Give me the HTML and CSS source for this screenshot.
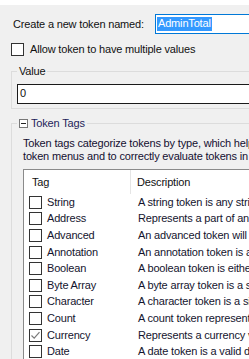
FILE: index.html
```html
<!DOCTYPE html>
<html>
<head>
<meta charset="utf-8">
<link rel="stylesheet" href="styles.css">
</head>
<body>
<div class="strip"></div>
<div class="name-row">
  <span class="name-label">Create a new token named:</span>
  <div class="textbox focused"><span class="sel">AdminTotal</span></div>
</div>
<div class="check-row">
  <span class="box"></span>
  <span>Allow token to have multiple values</span>
</div>
<fieldset class="group value-group">
  <legend>Value</legend>
  <div class="textbox dark">0</div>
</fieldset>
<fieldset class="group tags-group">
  <legend><span class="toggle"><span class="minus"></span></span><span class="title">Token Tags</span></legend>
  <p class="desc">Token tags categorize tokens by type, which helps build<br>token menus and to correctly evaluate tokens in documents.</p>
  <div class="listview">
    <div class="lv-header">
      <div class="col-tag">Tag</div>
      <div class="col-desc">Description</div>
    </div>
    <div class="lv-row"><div class="col-tag"><span class="box"></span>String</div><div class="col-desc">A string token is any string of text.</div></div>
    <div class="lv-row"><div class="col-tag"><span class="box"></span>Address</div><div class="col-desc">Represents a part of an address.</div></div>
    <div class="lv-row"><div class="col-tag"><span class="box"></span>Advanced</div><div class="col-desc">An advanced token will not be shown.</div></div>
    <div class="lv-row"><div class="col-tag"><span class="box"></span>Annotation</div><div class="col-desc">An annotation token is a note.</div></div>
    <div class="lv-row"><div class="col-tag"><span class="box"></span>Boolean</div><div class="col-desc">A boolean token is either true or false.</div></div>
    <div class="lv-row"><div class="col-tag"><span class="box"></span>Byte Array</div><div class="col-desc">A byte array token is a sequence.</div></div>
    <div class="lv-row"><div class="col-tag"><span class="box"></span>Character</div><div class="col-desc">A character token is a single character.</div></div>
    <div class="lv-row"><div class="col-tag"><span class="box"></span>Count</div><div class="col-desc">A count token represents a number.</div></div>
    <div class="lv-row"><div class="col-tag"><span class="box checked"><svg width="11" height="11" viewBox="0 0 11 11"><path d="M1.5 5.5 L4.2 8.2 L9.5 2.2" fill="none" stroke="#7a7a7a" stroke-width="1.2"/></svg></span>Currency</div><div class="col-desc">Represents a currency value.</div></div>
    <div class="lv-row"><div class="col-tag"><span class="box"></span>Date</div><div class="col-desc">A date token is a valid date.</div></div>
  </div>
</fieldset>
</body>
</html>
```
FILE: styles.css
```css
html, body {
  margin: 0;
  padding: 0;
  width: 249px;
  height: 359px;
  overflow: hidden;
}
body {
  background: #f0f0f0;
  font-family: "Liberation Sans", Arial, sans-serif;
  font-size: 11px;
  letter-spacing: -0.17px;
  color: #111;
  line-height: 13px;
}
.strip {
  height: 5px;
  background: #fff;
}
.name-row {
  display: flex;
  align-items: center;
  margin-top: 9px;
  padding-left: 13px;
  white-space: nowrap;
}
.name-label {
  width: 142px;
  flex: none;
}
.textbox {
  box-sizing: border-box;
  height: 20px;
  background: #fff;
  border: 1px solid #0078d7;
  padding: 2px 1px;
  white-space: nowrap;
  width: 140px;
  flex: none;
}
.textbox.dark {
  border-color: #1a1a1a;
  width: 260px;
  padding: 2px 2px;
}
.sel {
  background: #3399ff;
  color: #fff;
  padding: 0 1px 1px 1px;
  display: inline-block;
  line-height: 13px;
}
.check-row {
  display: flex;
  align-items: center;
  gap: 6px;
  margin-top: 9px;
  padding-left: 11px;
  white-space: nowrap;
}
.box {
  box-sizing: border-box;
  width: 13px;
  height: 13px;
  border: 1px solid #333;
  background: #fff;
  flex: none;
  display: inline-flex;
  align-items: center;
  justify-content: center;
}
.box.checked svg {
  display: block;
}
.group {
  border: 1px solid #dcdcdc;
  margin: 0 -40px 0 11px;
  min-width: 0;
  padding: 0 5px;
}
.group legend {
  padding: 0 2px;
  line-height: 13px;
  white-space: nowrap;
}
.value-group {
  margin-top: 9px;
  padding-top: 6px;
  padding-bottom: 4px;
}
.tags-group {
  margin-top: 8px;
  padding: 7px 0 0 11px;
  height: 260px;
}
.tags-group legend {
  display: flex;
  align-items: center;
  margin-left: -6px;
}
.toggle {
  box-sizing: border-box;
  width: 9px;
  height: 9px;
  border: 1px solid #777;
  background: #fff;
  display: inline-flex;
  align-items: center;
  justify-content: center;
  margin-right: 3px;
}
.minus {
  width: 5px;
  height: 1px;
  background: #222;
}
.title {
  color: #1e1e5a;
}
.desc {
  margin: 0;
  white-space: nowrap;
  color: #140f30;
}
.listview {
  margin-top: 6px;
  background: #fff;
  border: 1px solid #8a8a8a;
  width: 400px;
  height: 300px;
}
.lv-header {
  display: flex;
  height: 24px;
  align-items: stretch;
}
.lv-header .col-tag {
  width: 107px;
  box-sizing: border-box;
  padding-left: 8px;
  border-right: 1px solid #e5e5e5;
  display: flex;
  align-items: center;
}
.lv-header .col-desc {
  padding-left: 6px;
  display: flex;
  align-items: center;
}
.lv-row {
  display: flex;
  height: 16.6px;
  align-items: center;
  white-space: nowrap;
  color: #14142e;
}
.lv-row .col-tag {
  width: 114px;
  box-sizing: border-box;
  padding-left: 5px;
  display: flex;
  align-items: center;
  gap: 5px;
}
.lv-row .col-desc {
  padding-left: 0;
}
```
